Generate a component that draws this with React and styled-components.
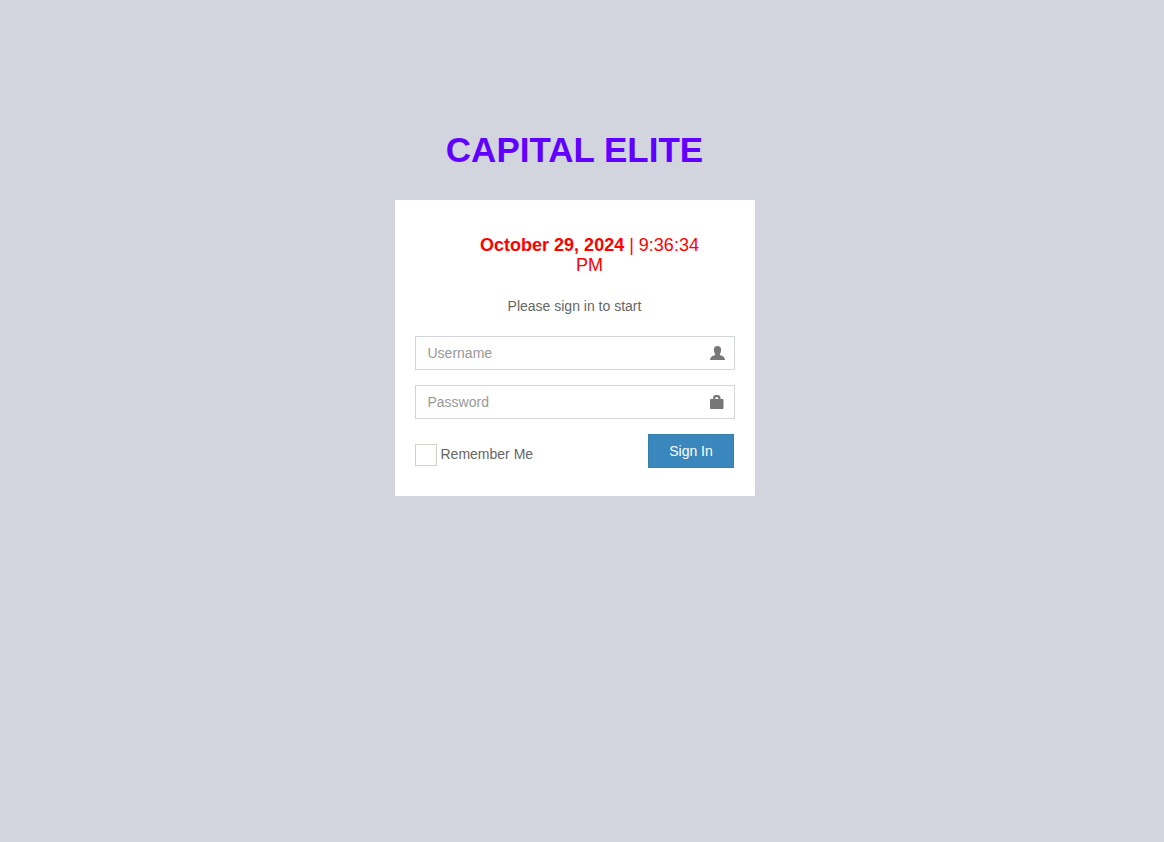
import styled, { createGlobalStyle } from "styled-components";

const GlobalStyle = createGlobalStyle`
  * {
    box-sizing: border-box;
  }
  html, body {
    height: 100%;
  }
  body {
    margin: 0;
    padding-right: 15px;
    background: #d2d5de;
    font-family: "Liberation Sans", Arial, sans-serif;
    font-size: 14px;
    line-height: 20px;
    color: #666;
  }
`;

const LoginPage = styled.main`
  width: 360px;
  margin: 0 auto;
  padding-top: 125px;
`;

const Logo = styled.h1`
  margin: 0 0 25px;
  font-size: 35px;
  line-height: 50px;
  font-weight: 700;
  text-align: center;
  color: #6200ff;
`;

const Card = styled.section`
  background: #fff;
  padding: 35px 20px 28px;
`;

const DateLine = styled.div`
  padding: 0 30px 0 60px;
  font-size: 18px;
  line-height: 20px;
  text-align: center;
  color: #ff0000;
  strong {
    font-weight: 700;
  }
`;

const Message = styled.p`
  margin: 21px 0 20px;
  text-align: center;
`;

const Field = styled.div`
  position: relative;
  margin-bottom: 15px;
`;

const Input = styled.input`
  display: block;
  width: 100%;
  height: 34px;
  padding: 6px 12px;
  border: 1px solid #d2d5de;
  border-radius: 0;
  outline: none;
  background: #fff;
  font: 14px/20px "Liberation Sans", Arial, sans-serif;
  color: #555;
  &::placeholder {
    color: #999;
    opacity: 1;
  }
`;

const FieldIcon = styled.svg`
  position: absolute;
  top: 10px;
  right: 10px;
  width: 15px;
  height: 14px;
  fill: #777;
`;

const Actions = styled.div`
  display: flex;
  justify-content: space-between;
  align-items: flex-start;
  padding-right: 0.5px;
`;

const Remember = styled.label`
  display: flex;
  align-items: center;
  gap: 4px;
  margin-top: 10px;
`;

const Check = styled.input`
  appearance: none;
  flex: none;
  width: 22px;
  height: 22px;
  margin: 0;
  border: 1px solid #d3d0c8;
  background: #fff;
`;

const RememberText = styled.span`
  position: relative;
  top: -1px;
`;

const SignIn = styled.button`
  width: 86px;
  height: 34px;
  padding: 0;
  border: 1px solid #367fa9;
  border-radius: 0;
  background: #3a87be;
  color: #fff;
  font: 14px/20px "Liberation Sans", Arial, sans-serif;
`;

export default function App() {
  return (
    <>
      <GlobalStyle />
      <LoginPage>
        <Logo>CAPITAL ELITE</Logo>
        <Card>
          <DateLine>
            <strong>October 29, 2024</strong> | 9:36:34 PM
          </DateLine>
          <Message>Please sign in to start</Message>
          <form onSubmit={(e) => e.preventDefault()}>
            <Field>
              <Input type="text" placeholder="Username" />
              <FieldIcon viewBox="0 0 15 14">
                <path d="M7.500 0C5.200 0 3.900 1.400 3.900 3.500c0 1.900.5 3.400 1.200 4.400v1.100C3.800 9.500 1.900 10.100 1.100 11.100.5 11.900.2 12.900 0 14h15c-.2-1.100-.5-2.100-1.100-2.900-.8-1-2.700-1.600-4-2.100V7.900c.7-1 1.200-2.500 1.200-4.400C11.100 1.400 9.800 0 7.500 0z" />
              </FieldIcon>
            </Field>
            <Field>
              <Input type="password" placeholder="Password" />
              <FieldIcon viewBox="0 0 15 14">
                <path fillRule="evenodd" d="M3 4V2.800C3 1.200 4.200 0 5.800 0h1.900c1.600 0 2.800 1.200 2.800 2.800V4h2c.6 0 1 .4 1 1v8c0 .6-.4 1-1 1H1c-.6 0-1-.4-1-1V5c0-.6.4-1 1-1h2zM5.200 4h3.100V2.900c0-.4-.3-.7-.7-.7H5.900c-.4 0-.7.3-.7.7V4z" />
              </FieldIcon>
            </Field>
            <Actions>
              <Remember>
                <Check type="checkbox" />
                <RememberText>Remember Me</RememberText>
              </Remember>
              <SignIn type="submit">Sign In</SignIn>
            </Actions>
          </form>
        </Card>
      </LoginPage>
    </>
  );
}
